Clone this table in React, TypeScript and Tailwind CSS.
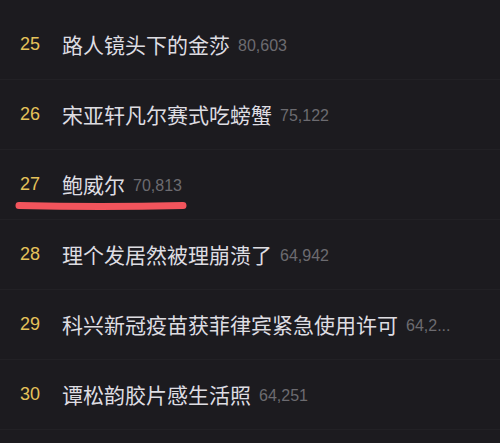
const rows = [
  { rank: 25, title: '路人镜头下的金莎', count: '80,603' },
  { rank: 26, title: '宋亚轩凡尔赛式吃螃蟹', count: '75,122' },
  { rank: 27, title: '鲍威尔', count: '70,813', marked: true },
  { rank: 28, title: '理个发居然被理崩溃了', count: '64,942' },
  { rank: 29, title: '科兴新冠疫苗获菲律宾紧急使用许可', count: '64,2...' },
  { rank: 30, title: '谭松韵胶片感生活照', count: '64,251' },
]

export default function App() {
  return (
    <div
      className="w-[500px] h-[443px] overflow-hidden bg-[#1c1b1f] pt-[10px]"
      style={{ fontFamily: '"Liberation Sans", "Noto Sans CJK SC", sans-serif' }}
    >
      {rows.map((row) => (
        <div
          key={row.rank}
          className="relative flex items-center h-[70px] border-b border-[#222125] pl-5 pr-[40px]"
        >
          <span className="w-[42px] shrink-0 text-[18px] text-[#e6c25a]">
            {row.rank}
          </span>
          <span
            className="shrink-0 whitespace-nowrap text-[21px] text-[#dedde2]"
            style={{ fontFamily: '"Noto Sans CJK SC", sans-serif' }}
          >
            {row.title}
          </span>
          <span className="ml-2 min-w-0 flex-1 whitespace-nowrap pt-[3px] text-[16px] text-[#6c6b70]">
            {row.count}
          </span>
          {row.marked && (
            <svg
              className="absolute left-0 top-[50px]"
              width="200"
              height="16"
              viewBox="0 0 200 16"
            >
              <path
                d="M19 5.5 Q100 7.5 183 5.5"
                stroke="#f2545c"
                strokeWidth="7"
                strokeLinecap="round"
                fill="none"
              />
            </svg>
          )}
        </div>
      ))}
    </div>
  )
}
